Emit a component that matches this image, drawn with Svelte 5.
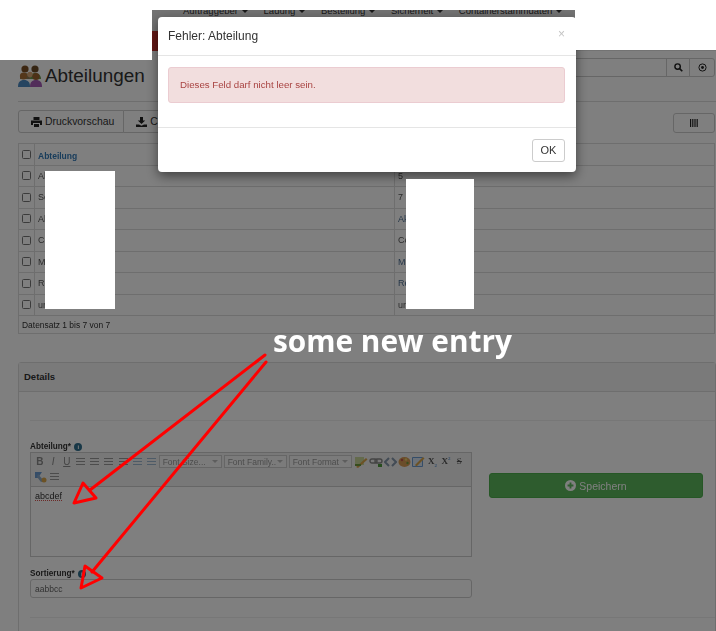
<script>
    const navItems = ['Auftraggeber', 'Ladung', 'Bestellung', 'Sicherheit', 'Containerstammdaten', 'S'];
    const rows = [
        { name: 'Ak', order: '5', link: false },
        { name: 'Se', order: '7', link: false },
        { name: 'Ak', order: 'Ak', link: true },
        { name: 'Co', order: 'Co', link: false },
        { name: 'Mi', order: 'Mi', link: true },
        { name: 'Re', order: 'Re', link: true },
        { name: 'un', order: 'un', link: false }
    ];
    const selects = ['Font Size...', 'Font Family..', 'Font Format'];
</script>

<div class="page">
    <nav class="topnav">
        <div class="menu">
            {#each navItems as item}
                <span class="menu-item">{item} <i class="caret"></i></span>
            {/each}
        </div>
        <div class="tab-red"></div>
    </nav>

    <header class="title-row">
        <div class="title">
            <svg width="24" height="23" viewBox="0 0 24 23">
                <circle cx="7" cy="4" r="3.6" fill="#7a4f25" />
                <circle cx="17" cy="4" r="3.6" fill="#6b4a26" />
                <path d="M2 14c0-4 2-6 5-6s5 2 5 6z" fill="#8b7a55" />
                <path d="M12 14c0-4 2-6 5-6s6 2 6 6z" fill="#6a9a4f" />
                <circle cx="5.5" cy="11" r="3.6" fill="#a86f36" />
                <circle cx="12" cy="9.5" r="2.8" fill="#d9a878" />
                <circle cx="18" cy="11.5" r="3.6" fill="#9a632e" />
                <path d="M0 22c0-5 2-7 6-7s6 2 6 7z" fill="#4a88c0" />
                <path d="M12 22c0-5 2-7 6-7s6 2 6 7z" fill="#a45ab5" />
            </svg>
            <h1>Abteilungen</h1>
        </div>
        <div class="search">
            <input type="text" aria-label="Suche" />
            <button class="icon-btn" aria-label="Suchen">
                <svg width="9" height="9" viewBox="0 0 10 10"><circle cx="4" cy="4" r="3" fill="none" stroke="#222" stroke-width="1.6" /><path d="M6 6l3.2 3.2" stroke="#222" stroke-width="1.8" /></svg>
            </button>
            <button class="icon-btn last" aria-label="Zurücksetzen">
                <svg width="9" height="9" viewBox="0 0 10 10"><circle cx="5" cy="5" r="4" fill="none" stroke="#222" stroke-width="1.1" /><circle cx="5" cy="5" r="1.6" fill="#222" /></svg>
            </button>
        </div>
    </header>

    <div class="toolbar">
        <div class="btn-group">
            <button class="btn">
                <svg width="11" height="10" viewBox="0 0 11 10"><path d="M2.5 0h6v3h-6zM0 3.5h11v4.5H9V6H2v2H0zM3 7h5v3H3z" fill="#222" /></svg>
                Druckvorschau
            </button>
            <button class="btn">
                <svg width="11" height="10" viewBox="0 0 11 10"><path d="M4 0h3v3.5h2.2L5.5 7 1.8 3.5H4zM0 7.5h3l2.5 1.2L8 7.5h3V10H0z" fill="#222" /></svg>
                CSV
            </button>
        </div>
        <button class="btn columns" aria-label="Spalten">
            <svg width="8" height="8" viewBox="0 0 8 8"><path d="M0 0h1.2v8H0zM2.2 0h1.2v8H2.2zM4.4 0h1.2v8H4.4zM6.6 0h1.2v8H6.6z" fill="#222" /></svg>
        </button>
    </div>

    <table class="grid">
        <thead>
            <tr>
                <th class="check"><i class="box"></i></th>
                <th class="c1"><a href="#top">Abteilung</a></th>
                <th></th>
            </tr>
        </thead>
        <tbody>
            {#each rows as row}
                <tr>
                    <td class="check"><i class="box"></i></td>
                    <td class="c1"><span class="name">{row.name}</span></td>
                    <td class:link={row.link}>{row.order}</td>
                </tr>
            {/each}
        </tbody>
        <tfoot>
            <tr><td colspan="3">Datensatz 1 bis 7 von 7</td></tr>
        </tfoot>
    </table>

    <section class="panel">
        <h2>Details</h2>
        <div class="panel-body">
            <hr />
            <div class="form">
                <div class="fields">
                    <label for="editor">Abteilung* <i class="info">i</i></label>
                    <div class="editor" id="editor">
                        <div class="ed-bar">
                            <div class="ed-row">
                                <b class="tb">B</b><em class="tb">I</em><u class="tb">U</u>
                                {#each [0, 1, 2, 3, 4, 5] as n}
                                    <span class="lines" class:blue={n > 3}></span>
                                {/each}
                                {#each selects as s}
                                    <span class="sel">{s}<i class="sel-arrow"></i></span>
                                {/each}
                                <svg class="ico" width="14" height="12" viewBox="0 0 14 12"><path d="M1 1h9v8H1z" fill="#c9d79a" /><path d="M2 11L12 2l1.5 1.5L4 12z" fill="#d9a54a" /><path d="M1 8h6v2H1z" fill="#6f9a3c" /></svg>
                                <svg class="ico" width="14" height="12" viewBox="0 0 14 12"><path d="M1 5a2 2 0 012-2h3a2 2 0 010 4H3a2 2 0 01-2-2zM6 5a2 2 0 012-2h3a2 2 0 010 4H8a2 2 0 01-2-2z" fill="none" stroke="#888" stroke-width="1.4" /><path d="M9 8h4v3H9z" fill="#4f9a3c" /></svg>
                                <svg class="ico" width="13" height="12" viewBox="0 0 13 12"><path d="M5 2L1 6l4 4M8 2l4 4-4 4" fill="none" stroke="#8597ab" stroke-width="2" /></svg>
                                <svg class="ico" width="13" height="12" viewBox="0 0 13 12"><ellipse cx="6.5" cy="6" rx="6" ry="5" fill="#d79a55" /><circle cx="4" cy="4" r="1.2" fill="#c0504d" /><circle cx="8" cy="3.5" r="1.2" fill="#e6d36a" /><circle cx="9.5" cy="7" r="1.2" fill="#6f9a3c" /></svg>
                                <svg class="ico" width="13" height="12" viewBox="0 0 13 12"><path d="M.5 1.5h10v9H.5z" fill="#d9e5f2" stroke="#6b9bd1" /><path d="M3 9l8-8 1.5 1.5-8 8z" fill="#d9a54a" /></svg>
                                <b class="tb small">X<sub>2</sub></b><b class="tb small">X<sup>2</sup></b><span class="tb small strike">S</span>
                            </div>
                            <div class="ed-row">
                                <svg class="ico first" width="13" height="12" viewBox="0 0 13 12"><path d="M1 1h7L4 7H1z" fill="#6b9bd1" /><path d="M4 3l6 7-3 1-4-5z" fill="#8aa9c8" /><circle cx="10" cy="9" r="2.5" fill="#d9a54a" /></svg>
                                <span class="lines"></span>
                            </div>
                        </div>
                        <div class="ed-text"><span class="typo">abcdef</span></div>
                    </div>
                    <label class="second" for="sort">Sortierung* <i class="info">i</i></label>
                    <input class="sort" id="sort" type="text" value="aabbcc" />
                </div>
                <div class="side">
                    <button class="save">
                        <svg width="11" height="11" viewBox="0 0 12 12"><circle cx="6" cy="6" r="6" fill="#fff" /><path d="M5 2.8h2V5h2.2v2H7v2.2H5V7H2.8V5H5z" fill="#5cb85c" /></svg>
                        Speichern
                    </button>
                </div>
            </div>
            <hr class="end" />
        </div>
    </section>

    <div class="backdrop"></div>

    <div class="modal" role="dialog">
        <div class="modal-head">
            <span>Fehler: Abteilung</span>
            <span class="close">×</span>
        </div>
        <div class="modal-body">
            <div class="alert">Dieses Feld darf nicht leer sein.</div>
        </div>
        <div class="modal-foot">
            <button class="ok">OK</button>
        </div>
    </div>

    <!-- Retusche und Anmerkungen aus dem Screenshot -->
    <div class="patch p-top"></div>
    <div class="patch p-left"></div>
    <div class="patch p-right"></div>
    <div class="patch p-cell1"></div>
    <div class="patch p-cell2"></div>

    <div class="note">some new entry</div>
    <svg class="arrows" width="716" height="631" viewBox="0 0 716 631">
        <g fill="none" stroke="#f00" stroke-width="3" stroke-linejoin="round" stroke-linecap="round">
            <path d="M265 355L90 490" />
            <path d="M83 483L74 503 96 498z" />
            <path d="M266 362L92 572" />
            <path d="M85 566L81 588 102 578z" />
        </g>
    </svg>
</div>

<style>
    :global(body) {
        margin: 0;
    }

    .page {
        position: relative;
        width: 716px;
        height: 631px;
        overflow: hidden;
        background: #fff;
        color: #333;
        font-family: "Liberation Sans", Arial, sans-serif;
        font-size: 9px;
    }

    button {
        font-family: inherit;
    }

    .topnav {
        height: 51px;
        background: #e6e6e6;
        box-sizing: border-box;
        position: relative;
    }
    .menu {
        display: flex;
        gap: 16px;
        padding: 5px 0 0 183px;
        font-size: 9.5px;
        color: #333;
        white-space: nowrap;
    }
    .caret {
        display: inline-block;
        border: 3px solid transparent;
        border-top-color: #333;
        border-bottom: 0;
        vertical-align: middle;
        margin-left: 1px;
    }
    .tab-red {
        position: absolute;
        left: 150px;
        top: 31px;
        width: 40px;
        height: 20px;
        background: #c9302c;
    }

    .title-row {
        height: 51px;
        box-sizing: border-box;
        margin-left: 18px;
        border-bottom: 1px solid #ddd;
        display: flex;
        justify-content: space-between;
        align-items: flex-start;
    }
    .title {
        display: flex;
        align-items: center;
        gap: 3px;
        padding-top: 14px;
    }
    h1 {
        margin: -2px 0 0;
        font-size: 18.9px;
        font-weight: 400;
        line-height: 24px;
        color: #333;
    }
    .search {
        display: flex;
        margin-top: 7px;
        margin-right: 1px;
    }
    .search input {
        width: 200px;
        height: 19px;
        box-sizing: border-box;
        border: 1px solid #ccc;
        padding: 0;
    }
    .icon-btn {
        width: 24px;
        height: 19px;
        padding: 0;
        margin-left: -1px;
        background: #fff;
        border: 1px solid #ccc;
        display: flex;
        align-items: center;
        justify-content: center;
    }
    .icon-btn.last {
        width: 26px;
        border-radius: 0 3px 3px 0;
    }

    .toolbar {
        display: flex;
        justify-content: space-between;
        align-items: flex-end;
        margin: 8px 1px 0 18px;
        height: 23px;
    }
    .btn-group {
        display: flex;
    }
    .btn {
        height: 23px;
        background: #fff;
        border: 1px solid #ccc;
        border-radius: 3px 0 0 3px;
        padding: 0 9px 0 12px;
        font-size: 10.4px;
        color: #333;
        display: flex;
        align-items: center;
        gap: 3px;
    }
    .btn-group .btn + .btn {
        margin-left: -1px;
        border-radius: 0 3px 3px 0;
    }
    .columns {
        width: 42px;
        height: 20px;
        border-radius: 3px;
        justify-content: center;
        padding: 0;
    }

    .grid {
        margin: 10px 1px 0 18px;
        width: 697px;
        border-collapse: collapse;
        table-layout: fixed;
        font-size: 9px;
        filter: blur(0.25px);
    }
    .grid th, .grid td {
        border: 1px solid #ddd;
        text-align: left;
        padding: 0 0 0 3px;
        height: 21.5px;
        box-sizing: border-box;
        font-weight: 400;
        color: #555;
    }
    .grid th {
        padding-top: 4px;
    }
    .grid th a {
        color: #337ab7;
        font-weight: 700;
        font-size: 8.5px;
        text-decoration: none;
    }
    .grid td.link {
        color: #4b6d91;
    }
    .grid .check {
        width: 16px;
        padding: 0 0 0 3px;
    }
    .grid .c1 {
        width: 360px;
    }
    .box {
        display: block;
        width: 7px;
        height: 7px;
        border: 1px solid #767676;
        border-radius: 1.5px;
        background: #fff;
    }
    .grid tfoot td {
        height: 18px;
        padding-left: 3px;
        color: #333;
        font-size: 8.45px;
    }

    .panel {
        margin: 28px 0 0 18px;
        border: 1px solid #ddd;
        border-radius: 3px 3px 0 0;
        height: 300px;
        filter: blur(0.3px);
    }
    h2 {
        margin: 0;
        height: 28px;
        line-height: 28px;
        padding-left: 5px;
        background: #f5f5f5;
        border-bottom: 1px solid #ddd;
        font-size: 9.5px;
        font-weight: 700;
        color: #333;
    }
    .panel-body {
        padding: 28px 0 0 11px;
    }
    hr {
        margin: 0;
        border: 0;
        border-top: 1px solid #eee;
    }
    hr.end {
        margin-top: 19px;
    }
    .form {
        display: flex;
        margin-top: 21px;
    }
    .fields {
        width: 442px;
    }
    label {
        display: block;
        height: 10px;
        line-height: 10px;
        font-size: 8.2px;
        font-weight: 700;
        color: #333;
    }
    .info {
        display: inline-block;
        width: 8px;
        height: 8px;
        line-height: 8px;
        border-radius: 50%;
        background: #31708f;
        color: #fff;
        font-size: 6px;
        font-weight: 700;
        font-style: normal;
        text-align: center;
        margin-left: 1px;
    }
    .second {
        margin-top: 12px;
    }
    .editor {
        height: 105px;
        box-sizing: border-box;
        border: 1px solid #ccc;
        display: flex;
        flex-direction: column;
    }
    .ed-bar {
        height: 34px;
        box-sizing: border-box;
        background: #f0f0f0;
        border-bottom: 1px solid #ccc;
        padding-top: 1px;
    }
    .ed-row {
        height: 15px;
        display: flex;
        align-items: center;
        color: #8a8a8a;
        font-size: 8.5px;
    }
    .ed-row .tb {
        width: 13.5px;
        text-align: center;
        font-family: "Liberation Sans", sans-serif;
        font-size: 10px;
    }
    .ed-row .tb:first-child {
        margin-left: 2px;
    }
    .ed-row .tb.small {
        font-family: "Liberation Serif", serif;
        font-size: 9px;
        color: #555;
        line-height: 9px;
    }
    .tb sub, .tb sup {
        font-size: 5px;
        color: #6b9bd1;
        line-height: 0;
    }
    .strike {
        text-decoration: line-through;
    }
    .lines {
        width: 9px;
        height: 7px;
        margin: 0 2.6px;
        background: repeating-linear-gradient(#999 0 1px, transparent 1px 3px);
    }
    .lines.blue {
        background: repeating-linear-gradient(#9db7cf 0 1px, transparent 1px 3px);
    }
    .sel {
        display: inline-flex;
        justify-content: space-between;
        align-items: center;
        width: 63px;
        height: 13px;
        box-sizing: border-box;
        margin-right: 2px;
        padding: 0 3px;
        border: 1px solid #ccc;
        background: #f7f7f7;
        color: #999;
        font-size: 8.5px;
        white-space: nowrap;
    }
    .sel-arrow {
        border: 3px solid transparent;
        border-top-color: #bbb;
        border-bottom: 0;
    }
    .ico {
        margin: 0 .5px;
        flex: none;
    }
    .ico.first {
        margin-left: 3px;
    }
    .ed-text {
        flex: 1;
        background: #fff;
        padding: 4px 4px;
        font-size: 9px;
        color: #333;
    }
    .typo {
        text-decoration: underline dotted #d9534f 1px;
    }
    .sort {
        display: block;
        width: 100%;
        height: 19px;
        box-sizing: border-box;
        padding: 0 4px;
        border: 1px solid #ccc;
        border-radius: 3px;
        color: #666;
        font-family: inherit;
        font-size: 8.5px;
    }
    .side {
        margin-left: 17px;
        padding-top: 31px;
    }
    .save {
        width: 214px;
        height: 25px;
        border: 1px solid #4cae4c;
        border-radius: 3px;
        background: #5cb85c;
        color: #fff;
        font-size: 10.5px;
        display: flex;
        align-items: center;
        justify-content: center;
        gap: 3px;
    }

    .backdrop {
        position: absolute;
        inset: 0;
        background: rgba(0, 0, 0, 0.5);
    }

    .modal {
        position: absolute;
        left: 158px;
        top: 17px;
        width: 418px;
        height: 155px;
        background: #fff;
        border-radius: 4px;
        box-shadow: 0 4px 12px rgba(0, 0, 0, 0.5);
        display: flex;
        flex-direction: column;
        color: #333;
    }
    .modal-head {
        height: 39px;
        box-sizing: border-box;
        border-bottom: 1px solid #e5e5e5;
        padding: 0 11px 0 10px;
        display: flex;
        justify-content: space-between;
        align-items: center;
        font-size: 12px;
    }
    .close {
        color: #c4c4c4;
        font-size: 12px;
        margin-top: -4px;
    }
    .modal-body {
        height: 71px;
        box-sizing: border-box;
        padding: 11px 11px 0 10px;
    }
    .alert {
        height: 36px;
        box-sizing: border-box;
        line-height: 34px;
        padding-left: 11px;
        background: #f2dede;
        border: 1px solid #ebccd1;
        border-radius: 3px;
        color: #a94442;
        font-size: 9.7px;
    }
    .modal-foot {
        flex: 1;
        border-top: 1px solid #e5e5e5;
        display: flex;
        justify-content: flex-end;
        align-items: center;
        padding-right: 11px;
    }
    .ok {
        width: 33px;
        height: 23px;
        padding: 0;
        background: #fff;
        border: 1px solid #ccc;
        border-radius: 3px;
        color: #333;
        font-size: 11px;
    }

    .patch {
        position: absolute;
        background: #fff;
    }
    .p-top { left: 0; top: 0; width: 716px; height: 10px; }
    .p-left { left: 0; top: 0; width: 152px; height: 60px; }
    .p-right { left: 575px; top: 0; width: 141px; height: 50px; }
    .p-cell1 { left: 45px; top: 171px; width: 70px; height: 138px; }
    .p-cell2 { left: 406px; top: 179px; width: 68px; height: 130px; }

    .note {
        position: absolute;
        left: 273px;
        top: 320px;
        color: #fff;
        font-family: "Open Sans", sans-serif;
        font-weight: 700;
        font-size: 29.8px;
        line-height: 42px;
        white-space: nowrap;
    }
    .arrows {
        position: absolute;
        left: 0;
        top: 0;
    }
</style>
